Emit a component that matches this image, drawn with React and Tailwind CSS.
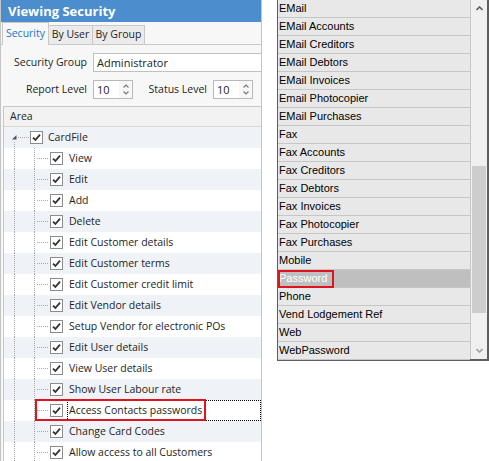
import React from "react"

const uiFont = { fontFamily: '"Open Sans", "Noto Sans", sans-serif' }
const listFont = { fontFamily: '"Liberation Sans", Arial, sans-serif' }

const children = [
  "View",
  "Edit",
  "Add",
  "Delete",
  "Edit Customer details",
  "Edit Customer terms",
  "Edit Customer credit limit",
  "Edit Vendor details",
  "Setup Vendor for electronic POs",
  "Edit User details",
  "View User details",
  "Show User Labour rate",
  "Access Contacts passwords",
  "Change Card Codes",
  "Allow access to all Customers",
]

const fields = [
  "EMail",
  "EMail Accounts",
  "EMail Creditors",
  "EMail Debtors",
  "EMail Invoices",
  "Email Photocopier",
  "EMail Purchases",
  "Fax",
  "Fax Accounts",
  "Fax Creditors",
  "Fax Debtors",
  "Fax Invoices",
  "Fax Photocopier",
  "Fax Purchases",
  "Mobile",
  "Password",
  "Phone",
  "Vend Lodgement Ref",
  "Web",
  "WebPassword",
]

// Checked box, drawn like the WinForms tree check
function Check() {
  return (
    <svg width="13" height="13" viewBox="0 0 13 13" className="shrink-0">
      <rect x="0.5" y="0.5" width="12" height="12" fill="#fff" stroke="#8c8c8c" />
      <path d="M3 6.6 L5.4 9 L10 3.6" fill="none" stroke="#333" strokeWidth="1.8" />
    </svg>
  )
}

// Up/down arrows of the numeric box
function Spin({ value }) {
  return (
    <div className="flex h-[19px] w-[40px] shrink-0 border border-[#b9b9b9] bg-white">
      <span className="flex-1 pl-[3px] text-[11px] leading-[17px] text-[#222]">{value}</span>
      <div className="flex w-[13px] flex-col items-center justify-center gap-[3px] bg-[#f7f7f7]">
        <svg width="6" height="4" viewBox="0 0 6 4">
          <path d="M0.5 3.5 L3 1 L5.5 3.5" fill="none" stroke="#7a7a7a" strokeWidth="1.2" />
        </svg>
        <svg width="6" height="4" viewBox="0 0 6 4">
          <path d="M0.5 0.5 L3 3 L5.5 0.5" fill="none" stroke="#7a7a7a" strokeWidth="1.2" />
        </svg>
      </div>
    </div>
  )
}

function Label({ children, w }) {
  return (
    <span className={`${w} shrink-0 whitespace-nowrap pr-[6px] text-right text-[10.5px] text-[#1e1e1e]`}>
      {children}
    </span>
  )
}

function Tab({ children, w, active }) {
  return active ? (
    <div className={`${w} -mb-px flex h-[23px] items-center justify-center whitespace-nowrap border border-b-0 border-[#c8c8c8] bg-[#f7f7f7] text-[10.5px] text-[#1c74c8]`}>
      {children}
    </div>
  ) : (
    <div className={`${w} flex h-[19px] items-center justify-center whitespace-nowrap border border-l-0 border-b-0 border-[#c8c8c8] bg-[#ebebeb] text-[10.5px] text-[#1e1e1e]`}>
      {children}
    </div>
  )
}

export default function App() {
  return (
    <div className="flex h-[461px] w-[489px] overflow-hidden bg-white" style={uiFont}>
      {/* Left: security settings panel */}
      <div className="flex h-full w-[262px] shrink-0 flex-col overflow-hidden border-l border-r border-[#c4c4c4] bg-[#f7f7f7]">
        <div className="h-[22px] shrink-0 bg-[#4b8dcd] pl-[7px] text-[13px] font-bold leading-[22px] text-white">
          Viewing Security
        </div>

        {/* Tabs */}
        <div className="flex h-[23px] shrink-0 items-end border-b border-[#c8c8c8] pl-[1px]">
          <Tab w="w-[47px]" active>Security</Tab>
          <Tab w="w-[44px]">By User</Tab>
          <Tab w="w-[52px]">By Group</Tab>
        </div>

        {/* Form */}
        <div className="flex shrink-0 flex-col gap-[8px] pt-[8px]">
          <div className="flex items-center">
            <Label w="w-[92px]">Security Group</Label>
            <div className="h-[19px] w-[172px] shrink-0 border border-[#c0c0c0] bg-white pl-[3px] text-[11px] leading-[17px] text-[#222]">
              Administrator
            </div>
          </div>
          <div className="flex items-center">
            <Label w="w-[92px]">Report Level</Label>
            <Spin value="10" />
            <Label w="w-[80px]">Status Level</Label>
            <Spin value="10" />
          </div>
        </div>

        {/* Area tree grid */}
        <div className="ml-[2px] mt-[7px] flex-1 border-l border-t border-[#c8c8c8] bg-white">
          <div className="h-[20px] border-b border-[#d6d6d6] bg-[#f2f2f2] pl-[6px] text-[10.5px] leading-[19px] text-[#1e1e1e]">
            Area
          </div>

          <div className="flex h-[21px] items-center bg-[#eff2f7]">
            <svg width="26" height="21" viewBox="0 0 26 21" className="shrink-0">
              <polygon points="12.5,8 12.5,12.5 8,12.5" fill="#555" />
              <line x1="14" y1="10.5" x2="25" y2="10.5" stroke="#a8a8a8" strokeDasharray="1 1" />
              <line x1="10.5" y1="15" x2="10.5" y2="21" stroke="#a8a8a8" strokeDasharray="1 1" />
            </svg>
            <Check />
            <span className="pl-[5px] text-[10.5px] text-[#1e1e1e]">CardFile</span>
          </div>

          {children.map((name, i) => {
            const focused = name === "Access Contacts passwords"
            return (
              <div
                key={name}
                className={`relative flex h-[21px] items-center ${i % 2 === 0 ? "bg-white" : "bg-[#eff2f7]"}`}
              >
                <svg width="46" height="21" viewBox="0 0 46 21" className="shrink-0">
                  <line x1="10.5" y1="0" x2="10.5" y2="21" stroke="#a8a8a8" strokeDasharray="1 1" />
                  <line x1="30.5" y1="0" x2="30.5" y2="21" stroke="#a8a8a8" strokeDasharray="1 1" />
                  <line x1="33" y1="10.5" x2="45" y2="10.5" stroke="#a8a8a8" strokeDasharray="1 1" />
                </svg>
                <Check />
                <span
                  className={`ml-[4px] flex-1 whitespace-nowrap pl-[1px] text-[10.5px] leading-[19px] text-[#1e1e1e] ${
                    focused ? "border border-dotted border-black" : "border border-transparent"
                  }`}
                >
                  {name}
                </span>
                {focused && (
                  <div className="pointer-events-none absolute left-[31px] top-[-1px] h-[22px] w-[171px] border-2 border-[#e0141e]" />
                )}
              </div>
            )
          })}
        </div>
      </div>

      {/* Right: field list */}
      <div className="ml-[15px] flex h-[361px] w-[212px] shrink-0 border-2 border-t-0 border-l border-[#5e5e5e]" style={listFont}>
        <div className="flex flex-1 flex-col border-r border-[#c8c8c8]">
          {fields.map((f) => {
            const sel = f === "Password"
            return (
              <div
                key={f}
                className={`relative h-[18px] border-b border-[#c6c6c6] pl-[1px] text-[11px] leading-[17px] ${
                  sel ? "bg-[#bfbfbf] text-white" : "bg-[#e8e8e8] text-black"
                }`}
              >
                {f}
                {sel && (
                  <div className="pointer-events-none absolute left-0 top-0 h-[18px] w-[56px] border-2 border-[#e0141e]" />
                )}
              </div>
            )
          })}
        </div>

        {/* Scrollbar */}
        <div className="flex w-[16px] flex-col bg-[#f0f0f0]">
          <div className="flex h-[17px] items-center justify-center">
            <svg width="7" height="5" viewBox="0 0 7 5">
              <path d="M0.5 4 L3.5 1 L6.5 4" fill="none" stroke="#606060" strokeWidth="1.6" />
            </svg>
          </div>
          <div className="h-[149px]" />
          <div className="mx-[1px] h-[147px] bg-[#cdcdcd]" />
          <div className="flex-1" />
          <div className="flex h-[17px] items-center justify-center">
            <svg width="7" height="5" viewBox="0 0 7 5">
              <path d="M0.5 1 L3.5 4 L6.5 1" fill="none" stroke="#a0a0a0" strokeWidth="1.6" />
            </svg>
          </div>
        </div>
      </div>
    </div>
  )
}
